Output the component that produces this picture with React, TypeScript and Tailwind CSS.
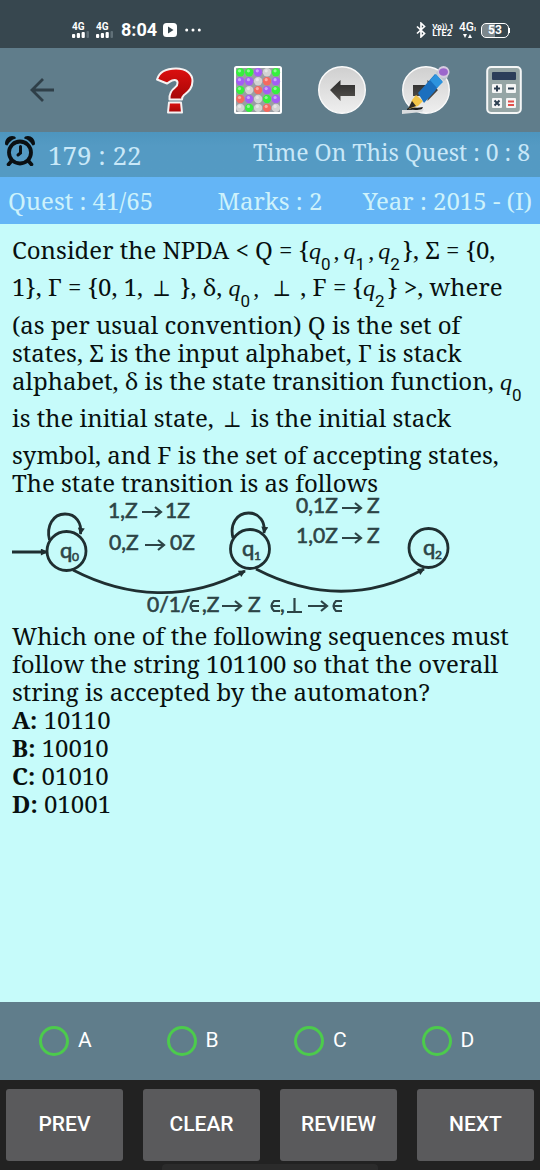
import type { ReactNode } from "react";

const OPTIONS = ["A", "B", "C", "D"];
const ACTIONS = ["PREV", "CLEAR", "REVIEW", "NEXT"];
const ANSWERS = [
  { key: "A", value: "10110" },
  { key: "B", value: "10010" },
  { key: "C", value: "01010" },
  { key: "D", value: "01001" },
];

function Signal() {
  return (
    <span className="flex w-[17px] flex-col items-start">
      <span className="h-2 text-[10px] leading-[8px] font-bold">4G</span>
      <svg viewBox="0 0 17 7" className="h-[7px] w-[17px]" aria-hidden="true">
        <rect x="0" y="3" width="3.200" height="4" rx="1" fill="#fff" />
        <rect x="4.800" y="2" width="3.200" height="5" rx="1" fill="#fff" />
        <rect x="9.600" y="1" width="3.200" height="6" rx="1" fill="#fff" />
        <rect x="14.500" y="0" width="2.500" height="7" rx="1" fill="#607078" />
      </svg>
    </span>
  );
}

function StatusBar() {
  return (
    <div className="flex h-12 items-end justify-between bg-[#37474f] pr-[30px] pb-2 pl-[72px] font-['Roboto',sans-serif] text-white">
      <div className="flex h-5 items-center">
        <Signal />
        <span className="w-[7px]" />
        <Signal />
        <span className="ml-2 text-[18px] leading-5 font-bold">8:04</span>
        <svg viewBox="0 0 14 14" className="ml-[6px] size-[14px]" aria-hidden="true">
          <rect width="14" height="14" rx="3.500" fill="#fff" />
          <path d="M5 3.600 10.500 7 5 10.400z" fill="#37474f" />
        </svg>
        <svg viewBox="0 0 16 4" className="ml-2 h-1 w-4" fill="#fff" aria-hidden="true">
          <circle cx="1.700" cy="2" r="1.500" />
          <circle cx="8" cy="2" r="1.500" />
          <circle cx="14.300" cy="2" r="1.500" />
        </svg>
      </div>
      <div className="flex h-5 items-center">
        <svg viewBox="0 0 10 16" className="h-4 w-[10px]" fill="none" stroke="#fff" strokeWidth="1.700" aria-hidden="true">
          <path d="M1 4.500 8.500 11.500 5 14.800V1.200L8.500 4.500 1 11.500" />
        </svg>
        <span className="ml-[6px] flex flex-col text-[8px] leading-[7px] font-bold">
          <span>Vo)) 1</span>
          <span className="text-[9px]">LTE2</span>
        </span>
        <span className="ml-[5px] flex flex-col items-center">
          <span className="text-[12px] leading-[11px] font-medium">
            4G<span className="text-[8px]">ı</span>
          </span>
          <svg viewBox="0 0 9 4" className="h-1 w-[9px]" fill="#fff" aria-hidden="true">
            <path d="M0 0h4L2 4zM5 4h4L7 0z" />
          </svg>
        </span>
        <span className="ml-[5px] flex items-center">
          <span className="flex h-[15px] w-7 items-center justify-center rounded-[5px] border-[1.500px] border-white bg-linear-to-r from-[#7c878c] from-50% to-[#37474f] to-50% text-[12px] leading-3 font-bold">
            53
          </span>
          <span className="h-[5px] w-px bg-white" />
        </span>
      </div>
    </div>
  );
}

function BackIcon() {
  return (
    <svg viewBox="0 0 24 24" className="size-6" fill="none" stroke="#2f3f48" strokeWidth="2.800" aria-hidden="true">
      <path d="M24 12H2M13 1 2 12l11 11" />
    </svg>
  );
}

function HelpIcon() {
  return (
    <svg viewBox="0 0 48 48" className="size-12" aria-hidden="true">
      <defs>
        <linearGradient id="red" x1="0" y1="0" x2="0" y2="1">
          <stop offset="0" stopColor="#dc1010" />
          <stop offset="1" stopColor="#a60606" />
        </linearGradient>
      </defs>
      <g fill="url(#red)" stroke="#f6f2f2" strokeWidth="2" strokeLinejoin="round">
        <path d="M7 13.500C9.500 5 17 2.500 26 2.500c10 0 16.500 5 16.500 12.500 0 8-5 11-8.500 14-2 1.800-2 2.500-2 4.500H19.500c-.5-6 1.500-9 5.500-12 3.500-2.600 3.500-7.500-.5-7.500-3.500 0-4.500 2-7.500 3.500z" />
        <path d="M19 36.500h12l1 10H18z" />
      </g>
    </svg>
  );
}

const DOTS = ["ggpwg", "ppwrp", "gwrpg", "rpwgp", "wgwrw"];
const DOT_FILL: Record<string, string> = {
  g: "#35f03d",
  p: "#a55cf5",
  w: "#d2d2d2",
  r: "#f4695f",
};

function PaletteIcon() {
  return (
    <svg viewBox="0 0 48 48" className="size-12" aria-hidden="true">
      <rect x="1" y="1" width="46" height="46" rx="1.500" fill="#9a9ea4" stroke="#fff" strokeWidth="2" />
      {DOTS.map((row, r) =>
        row.split("").map((c, i) => (
          <g key={`${r}-${i}`}>
            <circle cx={6.300 + i * 8.900} cy={6.300 + r * 8.900} r="4.200" fill={DOT_FILL[c]} />
            <circle cx={5.500 + i * 8.900} cy={4.800 + r * 8.900} r="1.600" fill="#fff" opacity="0.450" />
          </g>
        )),
      )}
    </svg>
  );
}

function Disc() {
  return (
    <>
      <defs>
        <linearGradient id="disc" x1="0" y1="0" x2="0" y2="1">
          <stop offset="0" stopColor="#cfcfcf" />
          <stop offset="1" stopColor="#efefef" />
        </linearGradient>
        <linearGradient id="ink" x1="0" y1="0" x2="0" y2="1">
          <stop offset="0" stopColor="#2b2b2b" />
          <stop offset="1" stopColor="#55524e" />
        </linearGradient>
      </defs>
      <circle cx="24" cy="24" r="23.300" fill="url(#disc)" stroke="#fafafa" strokeWidth="1.400" />
    </>
  );
}

function PreviousIcon() {
  return (
    <svg viewBox="0 0 48 48" className="size-12" aria-hidden="true">
      <Disc />
      <path d="M12 24 22.500 14v5H37v11H22.500v5z" fill="url(#ink)" />
    </svg>
  );
}

function WriteIcon() {
  return (
    <svg viewBox="0 0 48 48" className="size-12" aria-hidden="true">
      <Disc />
      <path d="M36 24 25.500 14v5H11v11h14.500v5z" fill="url(#ink)" />
      <path d="M0 44h14l8-1-2 3-20 2z" fill="#d9dcde" />
      <path d="M5 43c3-3 9 0 16-2l-1 2c-6 2-12 0-15 1z" fill="#1d1d1d" />
      <path d="m10 34 4-5 7 6-5 5-9 3z" fill="#f3c548" />
      <path d="m10 35-4 8 8-3z" fill="#2c2925" />
      <path d="m16 27 10-11 7-8 7 7-7 10-11 12z" fill="#1b6fbe" />
      <path d="m28 14 6-6 7 8-6 6z" fill="#2d93de" />
      <path d="m34 7 3-4 9 8-4 4z" fill="#b9c5cf" />
      <circle cx="41.500" cy="6" r="6" fill="#d5cbdf" />
      <ellipse cx="41.500" cy="6" rx="4.500" ry="3.800" fill="#9c66cc" />
    </svg>
  );
}

function CalculatorIcon() {
  return (
    <svg viewBox="0 0 36 48" className="h-12 w-9" aria-hidden="true">
      <rect x="1.200" y="1" width="33.600" height="46" rx="4" fill="#95a5a5" stroke="#f4f6f6" strokeWidth="2" />
      <rect x="6" y="6" width="24" height="8" rx="1" fill="#2c3e5a" />
      <g fill="#f4f5f5">
        <rect x="6" y="18" width="10" height="9" rx="1" />
        <rect x="20" y="18" width="10" height="9" rx="1" />
        <rect x="6" y="32" width="10" height="10" rx="1" />
        <rect x="20" y="32" width="10" height="10" rx="1" />
      </g>
      <g stroke="#2c3e50" strokeWidth="2">
        <path d="M8 22.500h6M11 19.500v6M22 22.500h6M8.500 34.500l5 5M13.500 34.500l-5 5" />
        <path d="M22 35.500h6M22 39h6" stroke="#e2504c" />
      </g>
    </svg>
  );
}

function AlarmIcon() {
  return (
    <svg viewBox="0 0 30 30" className="size-[30px]" fill="none" stroke="#0a0f12" aria-hidden="true">
      <circle cx="15" cy="16.500" r="11" strokeWidth="3.800" />
      <path d="M15.500 10.500v6.500l-2.500 2" strokeWidth="3" strokeLinecap="round" />
      <path d="m6.500 25-3 3.500M23.500 25l3 3.500" strokeWidth="3.600" strokeLinecap="round" />
      <path d="M0 7.500C0 3 3.500 0 7 0c2.500 0 3.500.8 4 2.300C6.500 4 4.500 6 2.500 9.500 .8 9.500 0 8.500 0 7.500zM30 7.500C30 3 26.500 0 23 0c-2.500 0-3.500.8-4 2.300C23.500 4 25.500 6 27.500 9.500c1.700 0 2.500-1 2.500-2z" fill="#0a0f12" stroke="none" />
    </svg>
  );
}

function Toolbar() {
  return (
    <header className="flex h-[84px] items-center justify-between bg-[#607d8b] pr-[18px] pl-[30px]">
      <button type="button" aria-label="Back">
        <BackIcon />
      </button>
      <div className="flex items-center gap-9">
        <button type="button" aria-label="Help">
          <HelpIcon />
        </button>
        <button type="button" aria-label="Question palette">
          <PaletteIcon />
        </button>
        <button type="button" aria-label="Previous">
          <PreviousIcon />
        </button>
        <button type="button" aria-label="Write">
          <WriteIcon />
        </button>
        <button type="button" aria-label="Calculator">
          <CalculatorIcon />
        </button>
      </div>
    </header>
  );
}

function Line({ children, gap }: { children: ReactNode; gap?: string }) {
  return <span className={`block ${gap ?? ""}`}>{children}</span>;
}

function State({ n }: { n: number }) {
  return (
    <span className="mr-[3px]">
      <i className="font-['Liberation_Serif',serif]">q</i>
      <sub className="bottom-[-11px] font-['Roboto',sans-serif] text-[17px] leading-none">{n}</sub>
    </span>
  );
}

function Comma() {
  return <span className="mr-1 font-['Liberation_Serif',serif]">,</span>;
}

function Bottom() {
  return <span className="mx-[3px] font-['DejaVu_Serif_Condensed',serif] text-[22px] leading-none">⊥</span>;
}

function Automaton() {
  return (
    <svg
      viewBox="0 0 440 122"
      className="mt-[3px] block h-[122px] w-[440px] max-w-full overflow-visible"
      role="img"
      aria-label="State transition diagram"
    >
      <defs>
        <marker id="tip" viewBox="0 0 8 8" refX="7" refY="4" markerWidth="8" markerHeight="7" markerUnits="userSpaceOnUse" orient="auto">
          <path d="M0 0 8 4 0 8z" fill="#1f2f31" />
        </marker>
      </defs>
      <g fill="none" stroke="#1f2f31" strokeWidth="2.800">
        <circle cx="54.500" cy="51" r="19.500" />
        <circle cx="238" cy="49" r="19.500" />
        <circle cx="416.500" cy="48" r="19.500" />
        <path d="M37.500 40C34 26 41 14 53 14c11 0 17 9 15.500 20" markerEnd="url(#tip)" />
        <path d="M221 38C217.500 24 225 13 236.500 13c11 0 17 9 15.500 20" markerEnd="url(#tip)" />
        <path d="M0 52h35" markerEnd="url(#tip)" />
        <path d="M61 70C115 98 175 102 233 71" markerEnd="url(#tip)" />
        <path d="M244 69C300 98 355 100 412 69" markerEnd="url(#tip)" />
      </g>
      <g fill="#2d4446" stroke="#2d4446" strokeWidth="0.600" className="font-['Lato','DejaVu_Sans',sans-serif] text-[21px]">
        <text x="96" y="18">1,Z</text>
        <text x="153" y="18">1Z</text>
        <text x="97" y="50">0,Z</text>
        <text x="158" y="50">0Z</text>
        <text x="284" y="13">0,1Z</text>
        <text x="355" y="13">Z</text>
        <text x="284" y="43">1,0Z</text>
        <text x="355" y="43">Z</text>
        <text x="135" y="112">0/1/</text>
        <text x="190" y="112">,Z</text>
        <text x="236" y="112">Z</text>
        <text x="268" y="112">,</text>
        <text x="48" y="58" className="text-[22px]">q</text>
        <text x="60" y="61" className="text-[12px]">0</text>
        <text x="230" y="56" className="text-[22px]">q</text>
        <text x="242" y="60" className="text-[12px]">1</text>
        <text x="411" y="55" className="text-[22px]">q</text>
        <text x="423" y="59" className="text-[12px]">2</text>
      </g>
      <g fill="none" stroke="#2d4446" strokeWidth="2.200">
        <path d="M130 12h19m-6-5 6 5-6 5M133 45h19m-6-5 6 5-6 5M330 8h19m-6-5 6 5-6 5M330 38h19m-6-5 6 5-6 5" />
        <path d="M210 106h19m-6-5 6 5-6 5M296 106h19m-6-5 6 5-6 5" />
        <path d="M187 101h-6q-5 5 0 10h6M178 106h9M268 101h-6q-5 5 0 10h6M259 106h9M330 101h-6q-5 5 0 10h6M321 106h9" />
        <path d="M275 112h15M282.500 98v14" />
      </g>
    </svg>
  );
}

function Question() {
  return (
    <main className="flex-1 bg-[#c6fbfa] px-3 pt-3 text-[24px] leading-7 whitespace-nowrap text-[#08100f]">
      <p>
        <Line gap="mb-2">
          Consider the NPDA &lt; Q = {"{"}
          <State n={0} />
          <Comma />
          <State n={1} />
          <Comma />
          <State n={2} />
          {"}"}, Σ = {"{"}0,
        </Line>
        <Line gap="mb-[9px]">
          1{"}"}, Γ = {"{"}0, 1, <Bottom /> {"}"}, δ, <State n={0} />
          <Comma /> <Bottom /> , F = {"{"}
          <State n={2} />
          {"}"} &gt;, where
        </Line>
        <Line>(as per usual convention) Q is the set of</Line>
        <Line>states, Σ is the input alphabet, Γ is stack</Line>
        <Line gap="mb-2">
          alphabet, δ is the state transition function, <State n={0} />
        </Line>
        <Line gap="mb-[9px]">
          is the initial state, <Bottom /> is the initial stack
        </Line>
        <Line>symbol, and F is the set of accepting states,</Line>
        <Line>The state transition is as follows</Line>
      </p>
      <Automaton />
      <p>
        <Line>Which one of the following sequences must</Line>
        <Line>follow the string 101100 so that the overall</Line>
        <Line>string is accepted by the automaton?</Line>
      </p>
      <ul>
        {ANSWERS.map((a) => (
          <li key={a.key}>
            <b>{a.key}:</b> {a.value}
          </li>
        ))}
      </ul>
    </main>
  );
}

export default function App() {
  return (
    <div className="flex min-h-screen flex-col bg-[#c6fbfa] font-['Noto_Serif','DejaVu_Serif',serif]">
      <StatusBar />
      <Toolbar />
      <div className="flex h-[45px] justify-between bg-linear-to-b from-[#4d95be] to-[#549ac3] to-30% pr-[10px] pl-[5px] text-[#c9e8f8]">
        <div className="flex items-start gap-[13px] pt-1">
          <AlarmIcon />
          <span className="pt-[3px] text-[26px] leading-8">179 : 22</span>
        </div>
        <span className="pt-1 text-[23px] leading-8">Time On This Quest : 0 : 8</span>
      </div>
      <div className="flex h-[47px] items-center justify-between bg-[#64b5f6] px-2 text-[24px] leading-8 text-[#cdf2fb]">
        <span>Quest : 41/65</span>
        <span className="ml-6">Marks : 2</span>
        <span>Year : 2015 - (I)</span>
      </div>
      <Question />
      <div
        role="radiogroup"
        aria-label="Answer"
        className="grid h-[78px] grid-cols-4 items-center gap-[9px] bg-[#607d8b] pl-[39px] font-['Roboto',sans-serif] text-[21px] text-white"
      >
        {OPTIONS.map((o) => (
          <label key={o} className="flex items-center gap-[9px]">
            <input
              type="radio"
              name="answer"
              value={o}
              className="size-[30px] appearance-none rounded-full border-3 border-[#4ccb4c] checked:bg-[#4ccb4c]"
            />
            {o}
          </label>
        ))}
      </div>
      <nav className="relative grid h-[90px] grid-cols-4 gap-5 bg-[#222222] px-[6px] py-[9px] font-['Roboto',sans-serif]">
        {ACTIONS.map((a) => (
          <button key={a} type="button" className="rounded-[3px] bg-[#5a5a5c] text-[21px] font-medium text-white">
            {a}
          </button>
        ))}
        <span className="absolute bottom-0 left-[30%] h-[6px] w-2/5 rounded-t bg-[#2b2b2b]" />
      </nav>
    </div>
  );
}
